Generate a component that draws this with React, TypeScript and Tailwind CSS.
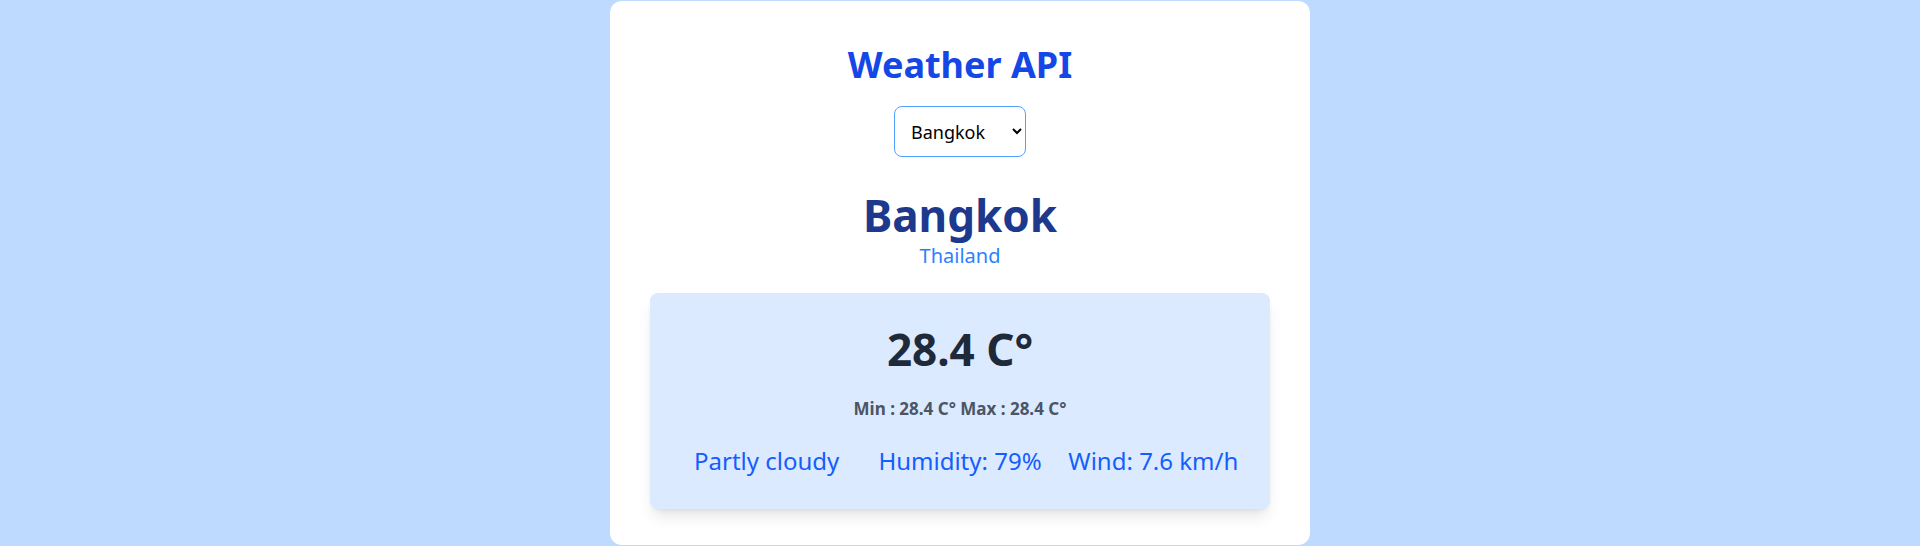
import { useState } from "react"

const cities = ["Bangkok", "Tokyo", "London", "Paris"]

const weather = {
  name: "Bangkok",
  country: "Thailand",
  temp: 28.4,
  min: 28.4,
  max: 28.4,
  condition: "Partly cloudy",
  humidity: 79,
  wind: 7.6,
}

export default function App() {
  const [city, setCity] = useState("Bangkok")

  return (
    <div className="flex min-h-screen items-center justify-center bg-blue-200 font-['Noto_Sans',sans-serif]">
      <div className="w-[700px] rounded-xl bg-white px-10 pt-11 pb-9 text-center">
        <h1 className="text-4xl leading-10 font-bold text-blue-700">Weather API</h1>

        <select
          value={city}
          onChange={(e) => setCity(e.target.value)}
          className="mt-[21px] h-[51px] w-[132px] rounded-lg border border-blue-400 bg-white px-3 text-lg text-black"
        >
          {cities.map((c) => (
            <option key={c} value={c}>
              {c}
            </option>
          ))}
        </select>

        {/* Noto runs wider than the original face, so the big lines sit a bit under 48px */}
        <h2 className="mt-8 text-[44px] leading-[52px] font-bold text-blue-900">
          {weather.name}
        </h2>
        <p className="mt-px text-xl leading-7 text-blue-500">{weather.country}</p>

        <div className="mt-[23px] rounded-lg bg-blue-100 px-5 py-8 shadow-lg">
          <p className="text-[44px] leading-[48px] font-bold text-gray-800">{weather.temp} C°</p>
          <p className="mt-6 text-[17px] leading-6 font-bold text-gray-600">
            Min : {weather.min} C° Max : {weather.max} C°
          </p>
          <div className="mt-6 grid grid-cols-3 text-2xl leading-8 text-blue-600">
            <span>{weather.condition}</span>
            <span>Humidity: {weather.humidity}%</span>
            <span>Wind: {weather.wind} km/h</span>
          </div>
        </div>
      </div>
    </div>
  )
}
